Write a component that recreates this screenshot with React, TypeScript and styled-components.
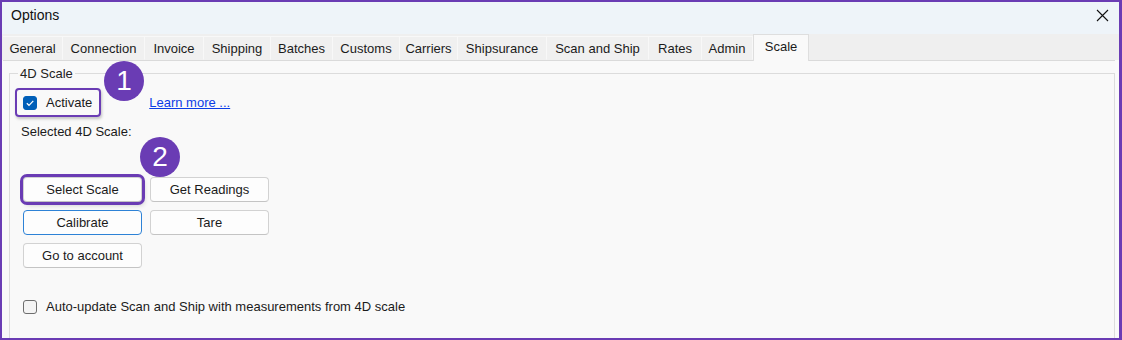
import React from "react";
import styled, { createGlobalStyle } from "styled-components";

const PURPLE = "#6a3cb4";
const FONT = `"Liberation Sans", Arial, sans-serif`;

const Global = createGlobalStyle`
  html, body { margin: 0; padding: 0; background: #ffffff; }
  body { font-family: ${FONT}; }
  * { box-sizing: border-box; }
`;

const Window = styled.div`
  position: relative;
  width: 1122px;
  height: 340px;
  border: 2px solid ${PURPLE};
  border-right-width: 3px;
  background: #fafafa;
  display: flex;
  flex-direction: column;
  overflow: hidden;
  font-family: ${FONT};
  color: #1b1b1b;
`;

const TitleBar = styled.div`
  height: 32px;
  flex: none;
  background: #eef4f9;
  display: flex;
  align-items: center;
  justify-content: space-between;
  padding: 0 10px 6px 9px;
  font-size: 14px;
  color: #111;
`;

const CloseButton = styled.div`
  width: 14px;
  height: 14px;
  display: flex;
  align-items: center;
  justify-content: center;
`;

const TabStrip = styled.div`
  height: 26px;
  flex: none;
  background: #efefef;
  display: flex;
  align-items: flex-end;
  padding-left: 1px;
`;

const Tab = styled.div<{ $w: number; $active?: boolean }>`
  width: ${(p) => p.$w}px;
  height: ${(p) => (p.$active ? 27 : 24)}px;
  margin-bottom: ${(p) => (p.$active ? -1 : 0)}px;
  position: relative;
  z-index: ${(p) => (p.$active ? 1 : 0)};
  display: flex;
  align-items: center;
  justify-content: center;
  padding-bottom: ${(p) => (p.$active ? 4 : 0)}px;
  font-size: 13px;
  color: #1b1b1b;
  background: ${(p) => (p.$active ? "#f9f9f9" : "#f0f0f0")};
  border: 1px solid ${(p) => (p.$active ? "#dedede" : "#f8f8f8")};
  border-bottom: ${(p) => (p.$active ? "none" : "1px solid #f0f0f0")};
  border-left: ${(p) => (p.$active ? "1px solid #dedede" : "none")};
  white-space: nowrap;
`;

const Panel = styled.div`
  flex: 1;
  margin: 0 4px 0 1px;
  background: #f9f9f9;
  border-top: 1px solid #dadada;
  overflow: hidden;
`;

const Group = styled.fieldset`
  margin: 5px 0 0 6px;
  height: 320px;
  padding: 7px 13px 0 13px;
  border: 1px solid #dcdcdc;
  border-radius: 0;
  display: flex;
  flex-direction: column;
  align-items: flex-start;
`;

const Legend = styled.legend`
  font-size: 13px;
  line-height: 15px;
  padding: 0 2px;
  margin-left: -5px;
  color: #222;
`;

const ActivateRow = styled.div`
  display: flex;
  align-items: center;
  gap: 48px;
  margin-left: -8px;
`;

const Highlight = styled.label`
  display: inline-flex;
  align-items: center;
  gap: 9px;
  height: 29px;
  padding: 0 7px 0 6px;
  border: 2px solid ${PURPLE};
  border-radius: 4px;
  box-shadow: 1px 2px 3px rgba(0, 0, 0, 0.22);
  font-size: 13px;
`;

const Check = styled.span<{ $checked?: boolean }>`
  width: 14px;
  height: 14px;
  flex: none;
  border-radius: 3px;
  display: inline-flex;
  align-items: center;
  justify-content: center;
  background: ${(p) => (p.$checked ? "#005fb8" : "#f4f4f4")};
  border: 1px solid ${(p) => (p.$checked ? "#005fb8" : "#6e6e6e")};
`;

const Link = styled.a`
  font-size: 13px;
  color: #0b3de6;
  text-decoration: underline;
  cursor: pointer;
`;

const Caption = styled.div`
  font-size: 13px;
  line-height: 15px;
  margin-top: 7px;
  margin-left: -2px;
`;

const ButtonGrid = styled.div`
  display: grid;
  grid-template-columns: 119px 119px;
  grid-auto-rows: 25px;
  column-gap: 8px;
  row-gap: 8px;
  margin-top: 38px;
`;

const Button = styled.button<{ $focus?: boolean; $mark?: boolean }>`
  font-family: ${FONT};
  font-size: 13px;
  color: #1b1b1b;
  background: #fdfdfd;
  border: 1px solid ${(p) => (p.$focus ? "#2d82d6" : "#d2d2d2")};
  border-bottom-color: ${(p) => (p.$focus ? "#2d82d6" : "#c4c4c4")};
  border-radius: 4px;
  padding: 0;
  outline: ${(p) => (p.$mark ? `3px solid ${PURPLE}` : "none")};
  outline-offset: 0px;
  box-shadow: ${(p) => (p.$mark ? "2px 3px 5px rgba(0,0,0,0.2)" : "none")};
`;

const AutoRow = styled.label`
  display: flex;
  align-items: center;
  gap: 9px;
  margin-top: 31px;
  font-size: 13px;
`;

const Badge = styled.div<{ $x: number; $y: number }>`
  position: absolute;
  left: ${(p) => p.$x}px;
  top: ${(p) => p.$y}px;
  width: 40px;
  height: 40px;
  border-radius: 50%;
  background: ${PURPLE};
  color: #fff;
  font-family: ${FONT};
  font-size: 28px;
  display: flex;
  align-items: center;
  justify-content: center;
  z-index: 5;
`;

const tabs: [string, number][] = [
  ["General", 60],
  ["Connection", 82],
  ["Invoice", 59],
  ["Shipping", 67],
  ["Batches", 62],
  ["Customs", 67],
  ["Carriers", 58],
  ["Shipsurance", 89],
  ["Scan and Ship", 102],
  ["Rates", 53],
  ["Admin", 51],
  ["Scale", 56],
];

export default function App() {
  return (
    <>
      <Global />
      <Window>
        <TitleBar>
          <span>Options</span>
          <CloseButton>
            <svg width="13" height="13" viewBox="0 0 13 13">
              <path d="M1 1 L12 12 M12 1 L1 12" stroke="#111" strokeWidth="1.1" />
            </svg>
          </CloseButton>
        </TitleBar>
        <TabStrip>
          {tabs.map(([t, w]) => (
            <Tab key={t} $w={w} $active={t === "Scale"}>
              {t}
            </Tab>
          ))}
        </TabStrip>
        <Panel>
          <Group>
            <Legend>4D Scale</Legend>
            <ActivateRow>
              <Highlight>
                <Check $checked>
                  <svg width="10" height="10" viewBox="0 0 10 10">
                    <path d="M1.8 5.2 L4 7.3 L8.3 2.8" fill="none" stroke="#fff" strokeWidth="1.2" />
                  </svg>
                </Check>
                Activate
              </Highlight>
              <Link>Learn more ...</Link>
            </ActivateRow>
            <Caption>Selected 4D Scale:</Caption>
            <ButtonGrid>
              <Button $mark>Select Scale</Button>
              <Button>Get Readings</Button>
              <Button $focus>Calibrate</Button>
              <Button>Tare</Button>
              <Button>Go to account</Button>
            </ButtonGrid>
            <AutoRow>
              <Check />
              Auto-update Scan and Ship with measurements from 4D scale
            </AutoRow>
          </Group>
        </Panel>
        <Badge $x={102} $y={59}>1</Badge>
        <Badge $x={138} $y={135}>2</Badge>
      </Window>
    </>
  );
}
